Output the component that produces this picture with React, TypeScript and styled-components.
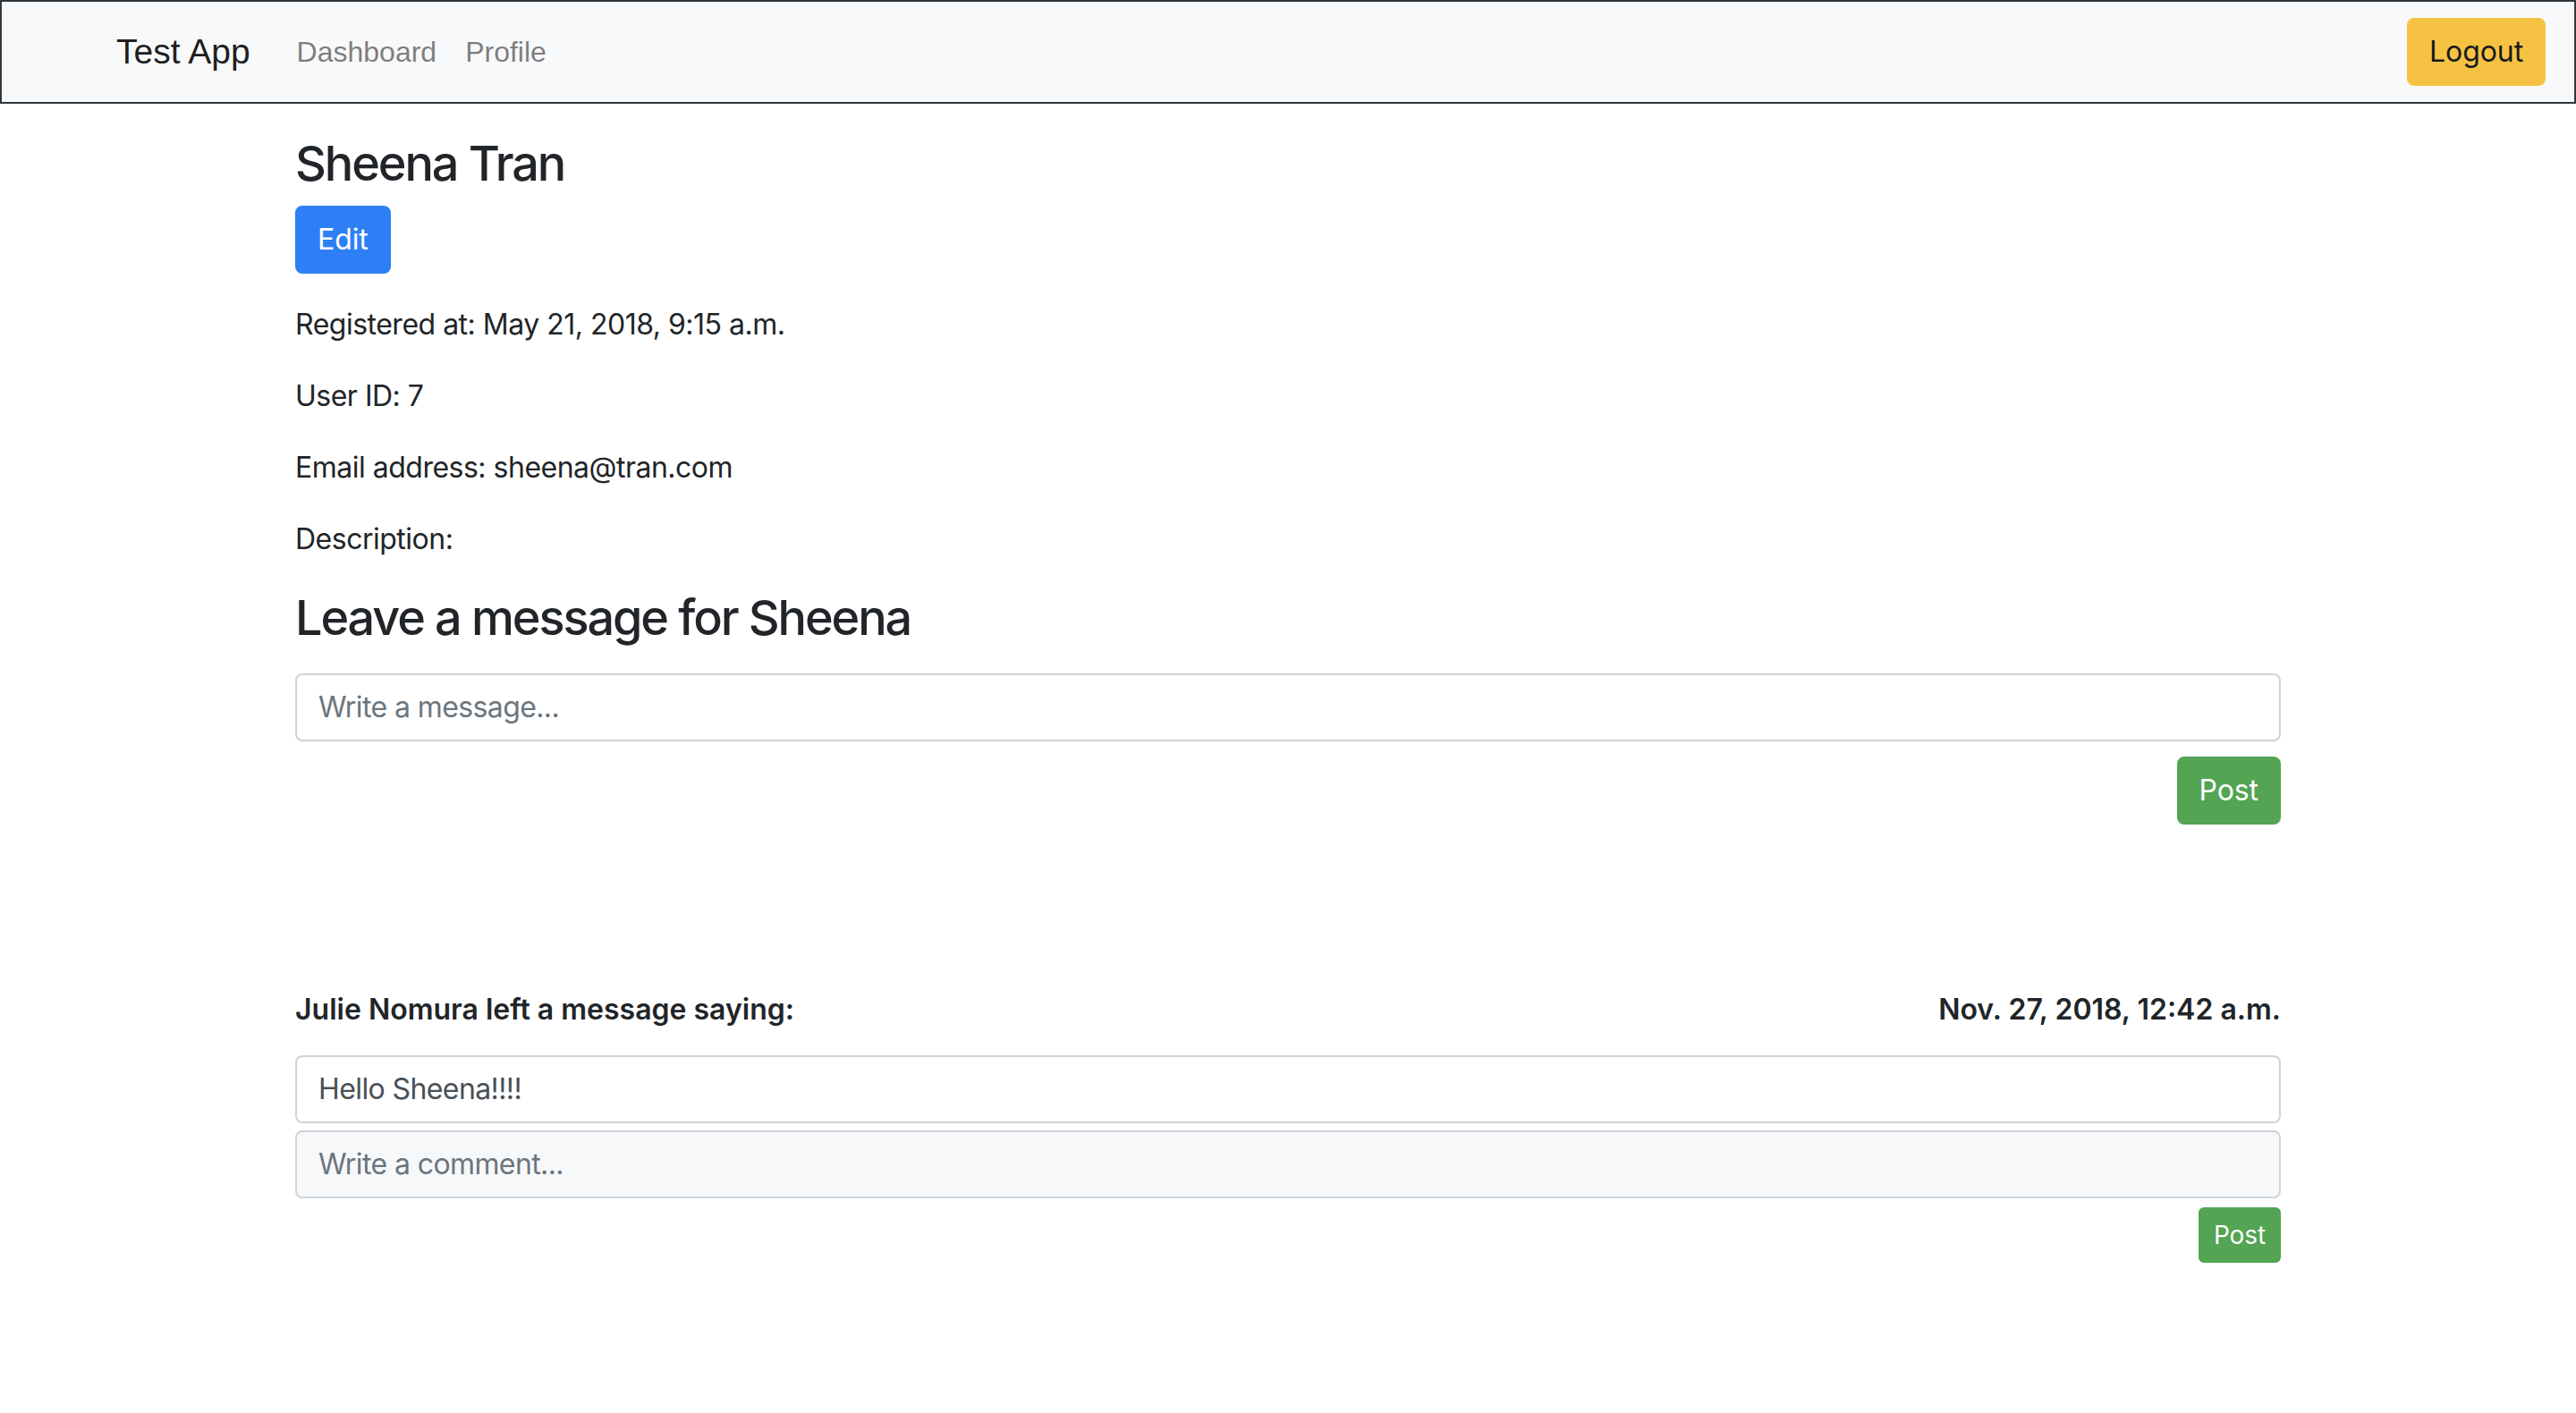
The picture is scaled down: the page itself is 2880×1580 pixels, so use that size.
import React from "react";
import styled, { createGlobalStyle } from "styled-components";

const GlobalStyle = createGlobalStyle`
  html, body { margin: 0; padding: 0; background: #ffffff; }
  body {
    font-family: Inter, "Noto Sans", "DejaVu Sans", sans-serif;
    color: #212529;
    font-size: 32px;
    line-height: 1.5;
  }
  * { box-sizing: border-box; }
`;

const Navbar = styled.nav`
  display: flex;
  align-items: center;
  justify-content: space-between;
  background: #f8f9fa;
  border: 2px solid #33383d;
  padding: 16px 32px 16px 128px;
`;

const NavLeft = styled.div`
  display: flex;
  align-items: center;
`;

const Brand = styled.a`
  font-family: "Liberation Sans", Arial, sans-serif;
  font-size: 39px;
  line-height: 1.5;
  color: rgba(0, 0, 0, 0.9);
  margin-right: 36px;
  text-decoration: none;
`;

const NavLink = styled.a`
  font-family: "Liberation Sans", Arial, sans-serif;
  font-size: 32px;
  line-height: 1.5;
  color: rgba(0, 0, 0, 0.5);
  padding: 16px 16px;
  text-decoration: none;
`;

type Variant = "primary" | "success" | "warning";

const colors: Record<Variant, { bg: string; fg: string }> = {
  primary: { bg: "#2e7ff6", fg: "#ffffff" },
  success: { bg: "#53a453", fg: "#ffffff" },
  warning: { bg: "#f6c244", fg: "#17191b" },
};

const Button = styled.button<{ $variant: Variant; $small?: boolean }>`
  font-family: Inter, "Noto Sans", sans-serif;
  font-weight: 400;
  letter-spacing: -0.1px;
  background: ${(p) => colors[p.$variant].bg};
  color: ${(p) => colors[p.$variant].fg};
  border: 2px solid ${(p) => colors[p.$variant].bg};
  border-radius: ${(p) => (p.$small ? "6px" : "8px")};
  font-size: ${(p) => (p.$small ? "28px" : "32px")};
  line-height: 1.5;
  padding: ${(p) => (p.$small ? "8px 15px" : "12px 23px")};
  cursor: pointer;
`;

const Container = styled.main`
  max-width: 2280px;
  margin: 0 auto;
  padding: 0 30px;
`;

const Heading = styled.h3<{ $top?: number; $bottom?: number }>`
  font-size: 54px;
  font-weight: 500;
  line-height: 1.2;
  margin: ${(p) => p.$top ?? 0}px 0 ${(p) => p.$bottom ?? 16}px;
  letter-spacing: -2.1px;
`;

const InfoList = styled.div`
  margin-top: 33px;
`;

const Info = styled.p`
  margin: 0 0 32px;
  font-size: 32px;
  line-height: 48px;
  letter-spacing: -0.5px;
`;

const Input = styled.input<{ $muted?: boolean }>`
  display: block;
  width: 100%;
  height: 76px;
  padding: 12px 24px;
  font-family: Inter, "Noto Sans", sans-serif;
  font-size: 32px;
  line-height: 1.5;
  letter-spacing: -0.6px;
  color: #495057;
  background: ${(p) => (p.$muted ? "#f7f8fa" : "#ffffff")};
  border: 2px solid #ced4da;
  border-radius: 8px;
  outline: none;
  &::placeholder { color: #6c757d; opacity: 1; }
`;

const Actions = styled.div<{ $top: number }>`
  display: flex;
  justify-content: flex-end;
  margin-top: ${(p) => p.$top}px;
`;

const Message = styled.section`
  margin-top: 188px;
`;

const MessageHeader = styled.div`
  display: flex;
  justify-content: space-between;
  align-items: baseline;
  font-size: 32px;
  font-weight: 600;
  line-height: 1.2;
  margin-bottom: 32px;
`;

const Stack = styled.div`
  display: flex;
  flex-direction: column;
  gap: 8px;
`;

export default function App() {
  return (
    <>
      <GlobalStyle />
      <Navbar>
        <NavLeft>
          <Brand>Test App</Brand>
          <NavLink>Dashboard</NavLink>
          <NavLink>Profile</NavLink>
        </NavLeft>
        <Button $variant="warning">Logout</Button>
      </Navbar>
      <Container>
        <Heading $top={35} $bottom={14}>Sheena Tran</Heading>
        <Button $variant="primary">Edit</Button>
        <InfoList>
          <Info>Registered at: May 21, 2018, 9:15 a.m.</Info>
          <Info>User ID: 7</Info>
          <Info>Email address: sheena@tran.com</Info>
          <Info>Description: </Info>
        </InfoList>
        <Heading $top={8} $bottom={29}>Leave a message for Sheena</Heading>
        <Input placeholder="Write a message..." />
        <Actions $top={17}>
          <Button $variant="success">Post</Button>
        </Actions>
        <Message>
          <MessageHeader>
            <span>Julie Nomura left a message saying:</span>
            <span>Nov. 27, 2018, 12:42 a.m.</span>
          </MessageHeader>
          <Stack>
            <Input defaultValue="Hello Sheena!!!!" readOnly />
            <Input $muted placeholder="Write a comment..." />
          </Stack>
          <Actions $top={10}>
            <Button $variant="success" $small>Post</Button>
          </Actions>
        </Message>
      </Container>
    </>
  );
}
